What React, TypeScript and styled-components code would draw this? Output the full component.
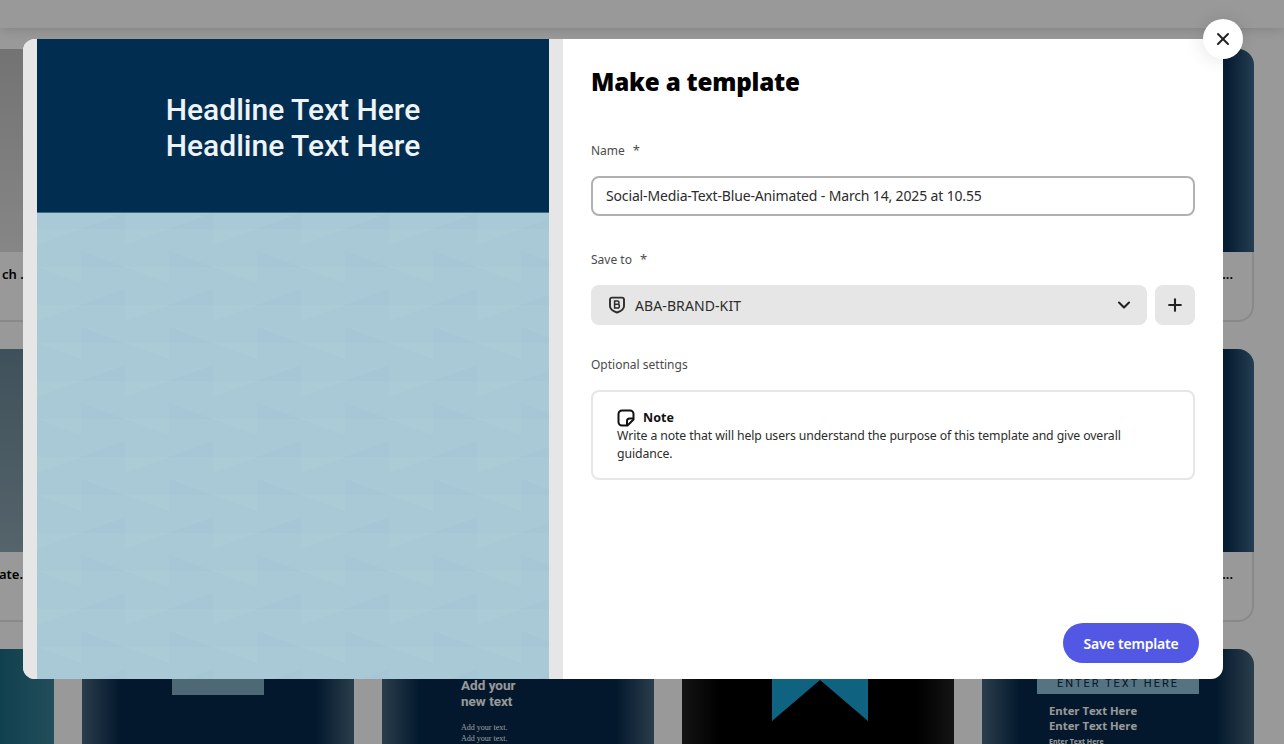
import styled, { createGlobalStyle } from 'styled-components';
import { ChevronDown, Plus, X } from 'lucide-react';

const GlobalStyle = createGlobalStyle`
  html, body {
    margin: 0;
    height: 100%;
    overflow: hidden;
    background: #fff;
    font-family: 'Noto Sans', 'Liberation Sans', sans-serif;
  }
  * { box-sizing: border-box; }
`;

/* ---------- page behind the dialog ---------- */

const Page = styled.div`
  width: 1284px;
  height: 744px;
  overflow: hidden;
  background: #fff;
`;

const TopBar = styled.div`
  height: 28px;
  background: #fff;
  box-shadow: 0 2px 12px rgba(0, 0, 0, 0.14);
`;

const CardGrid = styled.div`
  display: grid;
  grid-template-columns: repeat(5, 272px);
  grid-auto-rows: 273px;
  column-gap: 28px;
  row-gap: 27px;
  margin: 21px 0 0 -218px;
`;

const Card = styled.div`
  border-radius: 16px;
  background: #fff;
  box-shadow: inset 0 0 0 2px #e4e4e4;
  overflow: hidden;
`;

const fills = {
  gray: 'linear-gradient(180deg, #c0c0c0 0%, #e0e0e0 100%)',
  slate: 'linear-gradient(180deg, #698798 0%, #8fa7b2 100%)',
  navy: 'linear-gradient(90deg, #0b2f54 0%, #0b2f54 90%, #3e6788 100%)',
  teal: 'linear-gradient(90deg, #0c5f78 0%, #0c5f78 70%, #3a8296 100%)',
  deep: 'linear-gradient(90deg, #46677f 0%, #05294a 14%, #05294a 86%, #46677f 100%)',
  black: 'linear-gradient(90deg, #222 0%, #000 14%, #000 86%, #222 100%)',
};

const CardImage = styled.div<{ $fill: keyof typeof fills; $tall?: boolean }>`
  height: ${(props) => (props.$tall ? '100%' : '203px')};
  background: ${(props) => fills[props.$fill]};
  overflow: hidden;
`;

const CardCaption = styled.div<{ $inset: number }>`
  padding: 13px ${(props) => props.$inset}px 0 0;
  font-size: 13px;
  font-weight: 600;
  line-height: 18px;
  color: #000;
  text-align: right;
  white-space: nowrap;
`;

const BlockOne = styled.div`
  width: 92px;
  height: 46px;
  margin-left: 90px;
  background: #84adc5;
`;

const AddColumn = styled.div`
  padding: 28px 0 0 79px;
  color: #fff;
`;

const AddTitle = styled.div`
  font-family: Roboto, sans-serif;
  font-size: 13.5px;
  font-weight: 700;
  line-height: 16px;
  margin-bottom: 13px;
`;

const AddBody = styled.div`
  font-family: 'Liberation Serif', serif;
  font-size: 8px;
  line-height: 11px;
`;

const ChevronArt = styled.svg`
  display: block;
  margin-left: 90px;
`;

const EnterBand = styled.div`
  display: flex;
  align-items: flex-end;
  justify-content: center;
  width: 162px;
  height: 45px;
  margin-left: 55px;
  padding-bottom: 4px;
  background: #8fc0d8;
  color: #05294a;
  font-family: Roboto, sans-serif;
  font-size: 11px;
  letter-spacing: 2px;
`;

const EnterLines = styled.div`
  padding: 9px 0 0 67px;
  color: #fff;
  font-family: 'Open Sans', sans-serif;
  font-weight: 700;
`;

const EnterLine = styled.div<{ $small?: boolean }>`
  font-size: ${(props) => (props.$small ? '7px' : '11.3px')};
  line-height: ${(props) => (props.$small ? '17px' : '15px')};
`;

/* ---------- dialog ---------- */

const Scrim = styled.div`
  position: fixed;
  inset: 0;
  display: flex;
  align-items: center;
  justify-content: center;
  padding: 0 38px 26px 0;
  background: rgba(0, 0, 0, 0.4);
`;

const Dialog = styled.div`
  position: relative;
  flex: none;
  display: flex;
  width: 1200px;
  height: 640px;
  border-radius: 12px;
  background: #fff;
`;

const PreviewPane = styled.div`
  flex: 0 0 540px;
  padding: 0 14px;
  background: #e6e6e6;
  border-radius: 12px 0 0 12px;
`;

const PreviewPage = styled.div`
  display: flex;
  flex-direction: column;
  height: 100%;
  background-color: #a9c9d7;
  background-image:
    linear-gradient(160deg, rgba(255, 255, 255, 0.012) 50%, rgba(90, 120, 130, 0.016) 50%),
    linear-gradient(20deg, rgba(90, 120, 130, 0.016) 50%, rgba(255, 255, 255, 0.012) 50%);
  background-size: 88px 76px, 88px 76px;
  background-position: 0 0, 44px 38px;
`;

const PreviewHeader = styled.div`
  flex: 0 0 174px;
  padding-top: 53px;
  background: #002d50;
  border-bottom: 1px solid #3f6a87;
  color: #eef3f6;
  font-family: Roboto, sans-serif;
  font-size: 30px;
  font-weight: 500;
  line-height: 36px;
  text-align: center;
`;

const FormPane = styled.div`
  flex: 1;
  display: flex;
  flex-direction: column;
  padding: 24px 28px 16px;
`;

const Title = styled.h1`
  margin: 0;
  font-family: 'Open Sans', sans-serif;
  font-size: 24.2px;
  font-weight: 800;
  line-height: 38px;
  letter-spacing: -0.2px;
  color: #000;
`;

const FieldLabel = styled.div<{ $top: number }>`
  margin-top: ${(props) => props.$top}px;
  font-size: 12px;
  line-height: 18px;
  color: #4b4b4b;
`;

const Required = styled.span`
  margin-left: 8px;
  font-size: 13px;
  color: #4b4b4b;
`;

const TextInput = styled.div`
  display: flex;
  align-items: center;
  height: 40px;
  margin-top: 16px;
  padding: 0 13px 1px;
  border: 2px solid #b1b1b1;
  border-radius: 8px;
  font-size: 14px;
  letter-spacing: -0.15px;
  color: #2c2c2c;
`;

const SelectRow = styled.div`
  display: flex;
  gap: 8px;
  margin-top: 16px;
`;

const Select = styled.div`
  flex: 1;
  display: flex;
  align-items: center;
  gap: 9px;
  height: 40px;
  padding: 0 13px 0 17px;
  border-radius: 8px;
  background: #e6e6e6;
  font-size: 14px;
  letter-spacing: 0.1px;
  color: #2c2c2c;
`;

const SelectText = styled.span`
  flex: 1;
`;

const SquareButton = styled.div`
  display: flex;
  align-items: center;
  justify-content: center;
  width: 40px;
  height: 40px;
  border-radius: 8px;
  background: #e6e6e6;
  color: #222;
`;

const NoteBox = styled.div`
  height: 90px;
  margin-top: 16px;
  padding: 16px 24px 0;
  border: 2px solid #e6e6e6;
  border-radius: 8px;
  color: #2c2c2c;
`;

const NoteHead = styled.div`
  display: flex;
  align-items: center;
  gap: 8px;
  height: 19px;
  font-size: 12.5px;
  font-weight: 700;
  color: #111;
`;

const NoteText = styled.div`
  font-size: 12.25px;
  line-height: 18px;
  letter-spacing: -0.1px;
`;

const Footer = styled.div`
  display: flex;
  justify-content: flex-end;
  margin: auto -4px 0 0;
`;

const SaveButton = styled.button`
  width: 136px;
  height: 40px;
  border: 0;
  border-radius: 20px;
  background: #5258e4;
  color: #fff;
  font-family: 'Noto Sans', sans-serif;
  font-size: 14px;
  font-weight: 600;
  letter-spacing: -0.2px;
`;

const CloseButton = styled.button`
  position: absolute;
  top: -20px;
  right: -20px;
  display: flex;
  align-items: center;
  justify-content: center;
  width: 40px;
  height: 40px;
  padding: 0;
  border: 0;
  border-radius: 50%;
  background: #fff;
  color: #222;
  box-shadow: 0 0 20px rgba(0, 0, 0, 0.12);
`;

const BrandIcon = () => (
  <svg width="18" height="18" viewBox="0 0 18 18" fill="none" stroke="#2c2c2c">
    <path
      d="M4 1.600h10a2 2 0 0 1 2 2v6.700c0 3.200-3.500 5-7 6.200-3.500-1.200-7-3-7-6.200V3.600a2 2 0 0 1 2-2z"
      strokeWidth="1.900"
      strokeLinejoin="round"
    />
    <path d="M6.600 5h2.900c2 0 2 3.200.2 3.300 2.300.1 2.300 3.700-.2 3.700H6.600zM6.600 8.300h3" strokeWidth="1.500" />
  </svg>
);

const NoteIcon = () => (
  <svg width="18" height="18" viewBox="0 0 18 18" fill="none" stroke="#111" strokeWidth="2" strokeLinejoin="round">
    <path d="M10.500 16.500H5a3.500 3.500 0 0 1-3.500-3.500V5A3.500 3.500 0 0 1 5 1.500h8A3.500 3.500 0 0 1 16.500 5v5.500z" />
    <path d="M16.500 9.500h-4a2.500 2.500 0 0 0-2.500 2.500v4.500" />
  </svg>
);

export default function App() {
  return (
    <Page>
      <GlobalStyle />
      <TopBar />
      <CardGrid>
        <Card>
          <CardImage $fill="gray" />
          <CardCaption $inset={23}>ch ...</CardCaption>
        </Card>
        <Card />
        <Card />
        <Card />
        <Card>
          <CardImage $fill="navy" />
          <CardCaption $inset={21}>...</CardCaption>
        </Card>

        <Card>
          <CardImage $fill="slate" />
          <CardCaption $inset={31}>ate.</CardCaption>
        </Card>
        <Card />
        <Card />
        <Card />
        <Card>
          <CardImage $fill="navy" />
          <CardCaption $inset={21}>...</CardCaption>
        </Card>

        <Card>
          <CardImage $fill="teal" $tall />
        </Card>
        <Card>
          <CardImage $fill="deep" $tall>
            <BlockOne />
          </CardImage>
        </Card>
        <Card>
          <CardImage $fill="deep" $tall>
            <AddColumn>
              <AddTitle>
                Add your
                <br />
                new text
              </AddTitle>
              <AddBody>
                Add your text.
                <br />
                Add your text.
              </AddBody>
            </AddColumn>
          </CardImage>
        </Card>
        <Card>
          <CardImage $fill="black" $tall>
            <ChevronArt width="96" height="72" viewBox="0 0 96 72">
              <path d="M0 0h96v72L48 31 0 72z" fill="#1aa5d6" />
            </ChevronArt>
          </CardImage>
        </Card>
        <Card>
          <CardImage $fill="deep" $tall>
            <EnterBand>ENTER TEXT HERE</EnterBand>
            <EnterLines>
              <EnterLine>Enter Text Here</EnterLine>
              <EnterLine>Enter Text Here</EnterLine>
              <EnterLine $small>Enter Text Here</EnterLine>
            </EnterLines>
          </CardImage>
        </Card>
      </CardGrid>

      <Scrim>
        <Dialog>
          <PreviewPane>
            <PreviewPage>
              <PreviewHeader>
                Headline Text Here
                <br />
                Headline Text Here
              </PreviewHeader>
            </PreviewPage>
          </PreviewPane>

          <FormPane>
            <Title>Make a template</Title>

            <FieldLabel $top={40}>
              Name<Required>*</Required>
            </FieldLabel>
            <TextInput>Social-Media-Text-Blue-Animated - March 14, 2025 at 10.55</TextInput>

            <FieldLabel $top={34}>
              Save to<Required>*</Required>
            </FieldLabel>
            <SelectRow>
              <Select>
                <BrandIcon />
                <SelectText>ABA-BRAND-KIT</SelectText>
                <ChevronDown size={20} strokeWidth={2.5} color="#222" />
              </Select>
              <SquareButton>
                <Plus size={20} strokeWidth={2.5} />
              </SquareButton>
            </SelectRow>

            <FieldLabel $top={31}>Optional settings</FieldLabel>
            <NoteBox>
              <NoteHead>
                <NoteIcon />
                Note
              </NoteHead>
              <NoteText>
                Write a note that will help users understand the purpose of this template and give overall
                guidance.
              </NoteText>
            </NoteBox>

            <Footer>
              <SaveButton>Save template</SaveButton>
            </Footer>
          </FormPane>

          <CloseButton>
            <X size={20} strokeWidth={2.4} />
          </CloseButton>
        </Dialog>
      </Scrim>
    </Page>
  );
}
